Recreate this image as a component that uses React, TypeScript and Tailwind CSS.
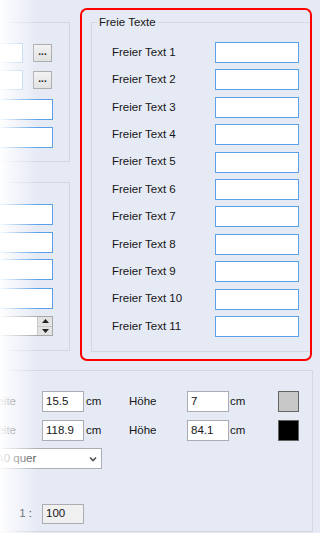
import React from "react"

const labels = Array.from({ length: 11 }, (_, i) => `Freier Text ${i + 1}`)

const Chevron = () => (
  <svg width="8" height="6" viewBox="0 0 8 6">
    <polyline points="1,1.5 4,4.5 7,1.5" fill="none" stroke="#505050" strokeWidth="1.6" />
  </svg>
)

const DotsButton = () => (
  <button className="ml-[10px] w-[19px] h-[18px] border border-[#adadad] bg-linear-to-b from-[#f2f2f2] to-[#e2e2e2] text-[10px] font-bold leading-none pb-[2px] text-[#222]">
    ...
  </button>
)

const App = () => {
  return (
    <div className="relative w-[320px] h-[533px] overflow-hidden bg-[#e6eaf5] font-['Liberation_Sans',Arial,sans-serif] text-[11.5px] text-[#161616]">
      {/* upper part */}
      <div className="flex pt-[8px] h-[361px]">
        {/* left column, scrolled out of view */}
        <div className="w-[70px] shrink-0 flex flex-col">
          <div className="mt-[14px] h-[140px] w-[70px] border border-l-0 border-[#d4d7de] pt-[20px] flex flex-col">
            <div className="flex items-center h-[20px]">
              <div className="w-[23px] h-full border border-l-0 border-[#a6cbef] bg-white" />
              <DotsButton />
            </div>
            <div className="mt-[7px] flex items-center h-[20px]">
              <div className="w-[23px] h-full border border-l-0 border-[#a6cbef] bg-white" />
              <DotsButton />
            </div>
            <div className="mt-[9px] w-[53px] h-[21px] border border-l-0 border-[#5ba0e8] bg-white" />
            <div className="mt-[7px] w-[53px] h-[21px] border border-l-0 border-[#5ba0e8] bg-white" />
          </div>

          <div className="mt-[20px] h-[169px] w-[70px] border border-l-0 border-[#d4d7de] pt-[21px] flex flex-col">
            <div className="w-[53px] h-[21px] border border-l-0 border-[#5ba0e8] bg-white" />
            <div className="mt-[7px] w-[53px] h-[21px] border border-l-0 border-[#5ba0e8] bg-white" />
            <div className="mt-[6px] w-[53px] h-[21px] border border-l-0 border-[#5ba0e8] bg-white" />
            <div className="mt-[8px] w-[53px] h-[21px] border border-l-0 border-[#5ba0e8] bg-white" />
            <div className="mt-[7px] w-[53px] h-[20px] border border-l-0 border-[#a8a8a8] bg-white flex justify-end items-stretch">
              <div className="w-[15px] flex flex-col border-l border-[#c8c8c8]">
                <div className="flex-1 flex items-center justify-center bg-[#e3e3e3] border-b border-[#c8c8c8]">
                  <svg width="7" height="4" viewBox="0 0 7 4"><polygon points="0,4 3.5,0 7,4" fill="#222" /></svg>
                </div>
                <div className="flex-1 flex items-center justify-center bg-[#e3e3e3]">
                  <svg width="7" height="4" viewBox="0 0 7 4"><polygon points="0,0 3.5,4 7,0" fill="#222" /></svg>
                </div>
              </div>
            </div>
          </div>
        </div>

        {/* highlighted group */}
        <div className="ml-[10px] w-[232px] h-[353px] border-2 border-[#ff0000] rounded-[7px] pl-[9px]">
          <fieldset className="mt-[5px] h-[337px] border border-r-0 border-[#d4d7de]">
            <legend className="ml-[5px] px-[2px] leading-[14px]">Freie Texte</legend>
            <div className="pt-[13px] flex flex-col gap-[6.4px]">
              {labels.map((l) => (
                <div key={l} className="flex items-center h-[21px]">
                  <div className="w-[123px] pl-[20px]">{l}</div>
                  <div className="w-[84px] h-[21px] border border-[#5ba0e8] bg-white" />
                </div>
              ))}
            </div>
          </fieldset>
        </div>
      </div>

      {/* lower group */}
      <div className="mt-[9px] w-[313px] h-[162px] border border-l-0 border-[#d4d7de] pt-[20px] flex flex-col">
        {[
          ["15.5", "7", "bg-[#c8c8c8]"],
          ["118.9", "84.1", "bg-black"],
        ].map(([w, h, sw], i) => (
          <div key={i} className={`flex items-center h-[21px] ${i ? "mt-[8px]" : ""}`}>
            <div className="w-[16px] flex justify-end whitespace-nowrap text-[#333]">Breite</div>
            <div className="ml-[26px] w-[42px] h-[21px] border border-[#abadb3] bg-white pl-[3px] flex items-center">{w}</div>
            <div className="w-[45px] pl-[2px]">cm</div>
            <div className="w-[58px]">Höhe</div>
            <div className="w-[42px] h-[21px] border border-[#abadb3] bg-white pl-[3px] flex items-center">{h}</div>
            <div className="w-[49px] pl-[1px]">cm</div>
            <div className={`w-[21px] h-[21px] border border-[#646464] ${sw}`} />
          </div>
        ))}
        <div className="mt-[7px] -ml-[8px] w-[110px] h-[21px] border border-[#abadb3] bg-white flex items-center pl-[3px] pr-[4px]">
          <span className="flex-1 whitespace-nowrap text-[#444]">A0 quer</span>
          <Chevron />
        </div>
        <div className="mt-[35px] flex items-center h-[20px]">
          <div className="w-[34px] pr-[2px] text-right">1 :</div>
          <div className="ml-[8px] w-[42px] h-[20px] border border-[#abadb3] bg-[#f0f0f0] pl-[3px] flex items-center">100</div>
        </div>
      </div>

      {/* fade at the scrolled left edge */}
      <div className="pointer-events-none absolute left-0 top-0 h-full w-[38px] bg-linear-to-r from-white/95 to-white/0" />
    </div>
  )
}

export default App
